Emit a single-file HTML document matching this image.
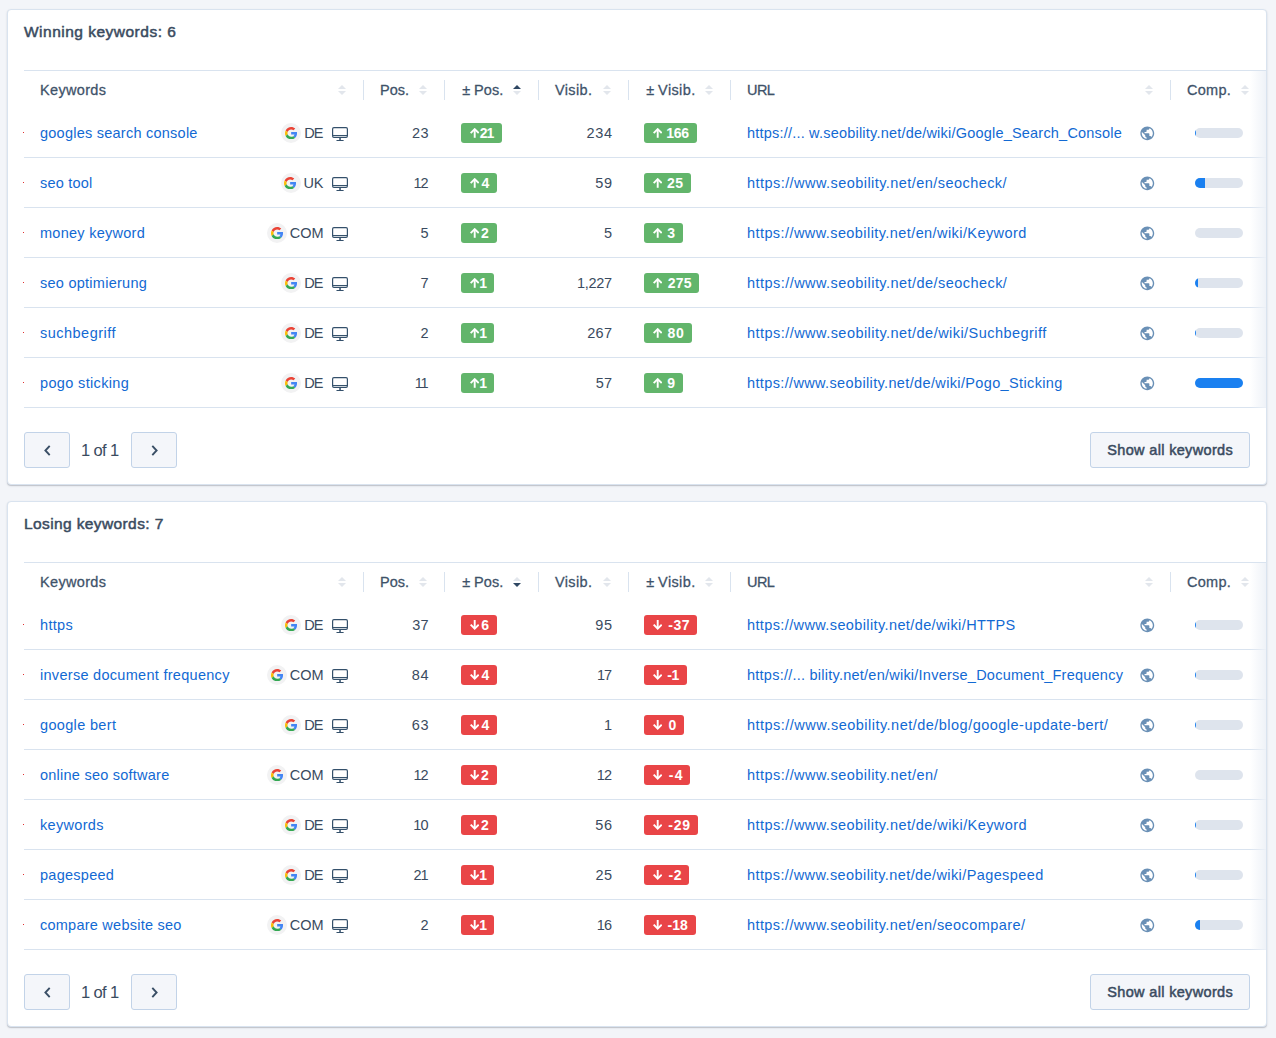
<!DOCTYPE html>
<html lang="en"><head><meta charset="utf-8"><title>Keywords</title>
<style>
*{box-sizing:border-box;margin:0;padding:0}
html,body{width:1276px;height:1038px;overflow:hidden}
body{background:#f3f5f9;font-family:"Liberation Sans",sans-serif;font-size:14.5px;color:#3a4b60;position:relative}
.card{position:absolute;left:7px;width:1260px;background:#fff;border:1px solid #d9e3ef;border-radius:4px;box-shadow:0 1px 1px rgba(30,40,60,.2),0 1px 3px rgba(30,40,60,.07)}
.card:nth-of-type(1){top:9px;height:476px}
.card:nth-of-type(2){top:501px;height:526px}
.title{position:absolute;left:16px;top:13px;-webkit-text-stroke:.5px #3a4b60;font-size:15.500px;line-height:18px;color:#3a4b60;white-space:nowrap}
.tw{position:absolute;left:16px;right:0;top:60px;border-top:1px solid #d9e3ef}
.thead{height:37px;display:flex;align-items:center}
.th{position:relative;height:37px;display:flex;align-items:center;padding-left:16px;color:#3a4b60;white-space:nowrap}
.thl{white-space:pre;color:#3e5269;-webkit-text-stroke:.27px #3e5269}
.th:after{content:"";position:absolute;right:0;top:9px;height:20px;width:1px;background:#d9e3ef}
.th.c7:after{display:none}
.sort{position:absolute;right:18px;top:14px;width:8px;height:10px}
.tr{height:50px;display:flex;align-items:center;box-shadow:inset 0 -1px 0 #d9e3ef;position:relative}
.dot{position:absolute;left:-1px;top:24px;width:1px;height:1px;background:#e03030}
.td{height:50px;display:flex;align-items:center;padding-left:16px;white-space:nowrap}
.c1{width:340px}.c2{width:81px}.c3{width:94px}.c4{width:90px}.c5{width:102px}.c6{width:440px}.c7{width:95px}
a{color:#1269d3;text-decoration:none}
.td.c1{justify-content:space-between;padding-right:16px}
.se{display:flex;align-items:center}
.gc{width:20px;height:20px;border-radius:50%;background:#f2f2f3;display:flex;align-items:center;justify-content:center}
.g{width:12.300px;height:12.300px;display:block}
.cc{margin-left:3px}
.mon{width:16px;height:14.200px;margin-top:2px}
.td.c2,.td.c4{justify-content:flex-end;padding-right:17px}.td.c2{padding-right:16.400px}
.badge{display:inline-flex;align-items:center;height:20px;border-radius:3px;color:#fff;font-weight:bold;font-size:14px;padding:0 7.800px 0 8.900px}
.ar{width:9.400px;height:9.900px;flex:none}
.bt{margin-left:auto}
.up{background:#62b56b}.down{background:#e94547}
.td.c6{position:relative}
.globe{position:absolute;right:15.300px;top:16.500px;width:16.600px;height:16.600px}
.bar{display:block;margin-left:8px;width:48px;height:10px;border-radius:5px;background:#dee4ed;overflow:hidden}
.bar i{display:block;height:100%;background:#1a80f0}
.fade{position:absolute;right:0;top:0;bottom:0;width:16px;background:linear-gradient(90deg,rgba(243,245,249,0),rgba(237,241,247,.92))}
.foot{position:absolute;left:16px;right:16px;bottom:16px;height:36px;display:flex;align-items:center}
.pb{width:46px;height:36px;border:1px solid #c2d3e8;border-radius:3px;background:#f4f6fa;display:flex;align-items:center;justify-content:center}
.chev{width:7px;height:11px}
.pg{font-size:16.500px;margin-left:11px;white-space:nowrap}
.sa{margin-left:auto;width:160px;height:36px;border:1px solid #c2d3e8;border-radius:3px;background:#f4f6fa;display:flex;align-items:center;justify-content:center;-webkit-text-stroke:.5px #3a4b60;font-size:14.500px;color:#3a4b60;white-space:nowrap}
.td.c5{padding-left:15px}
.c7 .sort{right:17px}

</style></head><body>
<div class="card"><div class="title" style="letter-spacing:0.491px;margin-right:-0.491px">Winning keywords: 6</div><div class="tw"><div class="thead"><div class="th c1"><span class="thl" style="letter-spacing:0.324px;margin-right:-0.324px">Keywords</span><svg class="sort" viewBox="0 0 8 10"><path d="M4 0L8 4H0z" fill="#e2e6ec"/><path d="M4 10L0 6h8z" fill="#e2e6ec"/></svg></div><div class="th c2"><span class="thl" style="letter-spacing:0.031px;margin-right:-0.031px">Pos.</span><svg class="sort" viewBox="0 0 8 10"><path d="M4 0L8 4H0z" fill="#e2e6ec"/><path d="M4 10L0 6h8z" fill="#e2e6ec"/></svg></div><div class="th c3"><span class="thl" style="letter-spacing:-0.061px;margin-right:0.061px;margin-left:1.2px">± </span><span class="thl" style="letter-spacing:0.031px;margin-right:-0.031px">Pos.</span><svg class="sort" viewBox="0 0 8 10"><path d="M4 0L8 4H0z" fill="#2f4763"/><path d="M4 10L0 6h8z" fill="#e2e6ec"/></svg></div><div class="th c4"><span class="thl" style="letter-spacing:0.370px;margin-right:-0.370px">Visib.</span><svg class="sort" viewBox="0 0 8 10"><path d="M4 0L8 4H0z" fill="#e2e6ec"/><path d="M4 10L0 6h8z" fill="#e2e6ec"/></svg></div><div class="th c5"><span class="thl" style="letter-spacing:-0.061px;margin-right:0.061px;margin-left:1.2px">± </span><span class="thl" style="letter-spacing:0.370px;margin-right:-0.370px">Visib.</span><svg class="sort" viewBox="0 0 8 10"><path d="M4 0L8 4H0z" fill="#e2e6ec"/><path d="M4 10L0 6h8z" fill="#e2e6ec"/></svg></div><div class="th c6"><span class="thl" style="letter-spacing:-0.552px;margin-right:0.552px">URL</span><svg class="sort" viewBox="0 0 8 10"><path d="M4 0L8 4H0z" fill="#e2e6ec"/><path d="M4 10L0 6h8z" fill="#e2e6ec"/></svg></div><div class="th c7"><span class="thl" style="letter-spacing:0.269px;margin-right:-0.269px">Comp.</span><svg class="sort" viewBox="0 0 8 10"><path d="M4 0L8 4H0z" fill="#e2e6ec"/><path d="M4 10L0 6h8z" fill="#e2e6ec"/></svg></div></div><div class="tr"><i class="dot"></i><div class="td c1"><a style="letter-spacing:0.241px;margin-right:-0.241px">googles search console</a><span class="se"><span class="gc"><svg class="g" viewBox="0 0 48 48"><path fill="#EA4335" d="M24 9.5c3.540 0 6.710 1.220 9.210 3.600l6.850-6.850C35.900 2.380 30.470 0 24 0 14.620 0 6.510 5.380 2.560 13.220l7.980 6.190C12.430 13.720 17.740 9.500 24 9.500z"/><path fill="#4285F4" d="M46.980 24.550c0-1.570-.15-3.090-.38-4.550H24v9.020h12.940c-.58 2.960-2.260 5.480-4.780 7.180l7.730 6c4.510-4.180 7.090-10.360 7.090-17.650z"/><path fill="#FBBC05" d="M10.530 28.590c-.48-1.450-.76-2.990-.76-4.590s.27-3.140.76-4.590l-7.980-6.190C.92 16.460 0 20.120 0 24c0 3.880.92 7.540 2.560 10.780l7.970-6.190z"/><path fill="#34A853" d="M24 48c6.480 0 11.930-2.130 15.890-5.810l-7.730-6c-2.150 1.450-4.920 2.300-8.160 2.300-6.260 0-11.570-4.220-13.470-9.910l-7.980 6.190C6.510 42.620 14.620 48 24 48z"/></svg></span><span class="cc" style="letter-spacing:-0.812px;margin-right:9.312px">DE</span><svg class="mon" viewBox="0 0 16 14.2" fill="none" stroke="#34506b"><rect x="0.600" y="0.600" width="14.800" height="9.800" rx="1.300" stroke-width="1.200"/><path d="M0.600 8.500h14.800" stroke-width="1"/><path d="M8.050 11v2.500" stroke-width="1.900" opacity=".8"/><path d="M4.900 13.550h6.300" stroke-width="1.100" stroke-linecap="round"/></svg></span></div><div class="td c2"><span style="letter-spacing:0.523px;margin-right:-0.523px">23</span></div><div class="td c3"><span class="badge up" style="width:41.16px"><svg class="ar" viewBox="13 49 91 96"><path d="M49.300 62h18.500v82h-18.500z" fill="#fff"/><path d="M19.500 99L58.500 60l39 39" fill="none" stroke="#fff" stroke-width="18.5"/></svg><span class="bt" style="letter-spacing:-0.891px;margin-right:0.891px">21</span></span></div><div class="td c4"><span style="letter-spacing:0.677px;margin-right:-0.677px">234</span></div><div class="td c5"><span class="badge up" style="width:52.94px"><svg class="ar" viewBox="13 49 91 96"><path d="M49.300 62h18.500v82h-18.500z" fill="#fff"/><path d="M19.500 99L58.500 60l39 39" fill="none" stroke="#fff" stroke-width="18.5"/></svg><span class="bt" style="letter-spacing:-0.286px;margin-right:0.286px">166</span></span></div><div class="td c6"><a style="letter-spacing:0.207px;margin-right:-0.207px">https://... w.seobility.net/de/wiki/Google_Search_Console</a><svg class="globe" viewBox="0 0 24 24"><path fill="#6a90b6" d="M12 2C6.480 2 2 6.480 2 12s4.480 10 10 10 10-4.480 10-10S17.520 2 12 2zm-1 17.930c-3.950-.49-7-3.850-7-7.930 0-.62.080-1.210.210-1.790L9 15v1c0 1.100.9 2 2 2v1.930zm6.900-2.540c-.26-.81-1-1.390-1.900-1.390h-1v-3c0-.55-.45-1-1-1H8v-2h2c.55 0 1-.45 1-1V7h2c1.100 0 2-.9 2-2v-.41c2.930 1.190 5 4.060 5 7.410 0 2.080-.8 3.970-2.100 5.390z"/></svg></div><div class="td c7"><span class="bar"><i style="width:1.2px"></i></span></div></div><div class="tr"><i class="dot"></i><div class="td c1"><a style="letter-spacing:0.215px;margin-right:-0.215px">seo tool</a><span class="se"><span class="gc"><svg class="g" viewBox="0 0 48 48"><path fill="#EA4335" d="M24 9.5c3.540 0 6.710 1.220 9.210 3.600l6.850-6.850C35.900 2.380 30.470 0 24 0 14.620 0 6.510 5.380 2.560 13.220l7.980 6.190C12.430 13.720 17.740 9.500 24 9.500z"/><path fill="#4285F4" d="M46.980 24.550c0-1.570-.15-3.090-.38-4.550H24v9.020h12.940c-.58 2.960-2.260 5.480-4.780 7.180l7.730 6c4.510-4.180 7.090-10.360 7.090-17.650z"/><path fill="#FBBC05" d="M10.530 28.590c-.48-1.450-.76-2.990-.76-4.590s.27-3.140.76-4.590l-7.980-6.190C.92 16.460 0 20.120 0 24c0 3.880.92 7.540 2.560 10.780l7.970-6.190z"/><path fill="#34A853" d="M24 48c6.480 0 11.930-2.130 15.890-5.810l-7.730-6c-2.150 1.450-4.920 2.300-8.160 2.300-6.260 0-11.570-4.220-13.470-9.910l-7.980 6.190C6.510 42.620 14.620 48 24 48z"/></svg></span><span class="cc" style="letter-spacing:-0.164px;margin-right:8.664px">UK</span><svg class="mon" viewBox="0 0 16 14.2" fill="none" stroke="#34506b"><rect x="0.600" y="0.600" width="14.800" height="9.800" rx="1.300" stroke-width="1.200"/><path d="M0.600 8.500h14.800" stroke-width="1"/><path d="M8.050 11v2.500" stroke-width="1.900" opacity=".8"/><path d="M4.900 13.550h6.300" stroke-width="1.100" stroke-linecap="round"/></svg></span></div><div class="td c2"><span style="letter-spacing:-0.953px;margin-right:0.953px">12</span></div><div class="td c3"><span class="badge up" style="width:36.16px"><svg class="ar" viewBox="13 49 91 96"><path d="M49.300 62h18.500v82h-18.500z" fill="#fff"/><path d="M19.500 99L58.500 60l39 39" fill="none" stroke="#fff" stroke-width="18.5"/></svg><span class="bt" style="letter-spacing:1.000px;margin-right:-1.000px">4</span></span></div><div class="td c4"><span style="letter-spacing:0.531px;margin-right:-0.531px">59</span></div><div class="td c5"><span class="badge up" style="width:46.96px"><svg class="ar" viewBox="13 49 91 96"><path d="M49.300 62h18.500v82h-18.500z" fill="#fff"/><path d="M19.500 99L58.500 60l39 39" fill="none" stroke="#fff" stroke-width="18.5"/></svg><span class="bt" style="letter-spacing:0.461px;margin-right:-0.461px">25</span></span></div><div class="td c6"><a style="letter-spacing:0.445px;margin-right:-0.445px">https://www.seobility.net/en/seocheck/</a><svg class="globe" viewBox="0 0 24 24"><path fill="#6a90b6" d="M12 2C6.480 2 2 6.480 2 12s4.480 10 10 10 10-4.480 10-10S17.520 2 12 2zm-1 17.930c-3.950-.49-7-3.850-7-7.930 0-.62.080-1.210.210-1.790L9 15v1c0 1.100.9 2 2 2v1.930zm6.900-2.540c-.26-.81-1-1.390-1.900-1.390h-1v-3c0-.55-.45-1-1-1H8v-2h2c.55 0 1-.45 1-1V7h2c1.100 0 2-.9 2-2v-.41c2.930 1.190 5 4.060 5 7.410 0 2.080-.8 3.970-2.100 5.390z"/></svg></div><div class="td c7"><span class="bar"><i style="width:10px"></i></span></div></div><div class="tr"><i class="dot"></i><div class="td c1"><a style="letter-spacing:0.263px;margin-right:-0.263px">money keyword</a><span class="se"><span class="gc"><svg class="g" viewBox="0 0 48 48"><path fill="#EA4335" d="M24 9.5c3.540 0 6.710 1.220 9.210 3.600l6.850-6.850C35.900 2.380 30.470 0 24 0 14.620 0 6.510 5.380 2.560 13.220l7.980 6.190C12.430 13.720 17.740 9.500 24 9.500z"/><path fill="#4285F4" d="M46.980 24.550c0-1.570-.15-3.090-.38-4.550H24v9.020h12.940c-.58 2.960-2.260 5.480-4.780 7.180l7.730 6c4.510-4.180 7.090-10.360 7.090-17.650z"/><path fill="#FBBC05" d="M10.530 28.590c-.48-1.450-.76-2.990-.76-4.590s.27-3.140.76-4.590l-7.980-6.190C.92 16.460 0 20.120 0 24c0 3.880.92 7.540 2.560 10.780l7.970-6.190z"/><path fill="#34A853" d="M24 48c6.480 0 11.930-2.130 15.890-5.810l-7.730-6c-2.150 1.450-4.920 2.300-8.160 2.300-6.260 0-11.570-4.220-13.470-9.910l-7.980 6.190C6.510 42.620 14.620 48 24 48z"/></svg></span><span class="cc" style="letter-spacing:-0.089px;margin-right:8.589px">COM</span><svg class="mon" viewBox="0 0 16 14.2" fill="none" stroke="#34506b"><rect x="0.600" y="0.600" width="14.800" height="9.800" rx="1.300" stroke-width="1.200"/><path d="M0.600 8.500h14.800" stroke-width="1"/><path d="M8.050 11v2.500" stroke-width="1.900" opacity=".8"/><path d="M4.900 13.550h6.300" stroke-width="1.100" stroke-linecap="round"/></svg></span></div><div class="td c2"><span style="letter-spacing:0.438px;margin-right:-0.438px">5</span></div><div class="td c3"><span class="badge up" style="width:35.57px"><svg class="ar" viewBox="13 49 91 96"><path d="M49.300 62h18.500v82h-18.500z" fill="#fff"/><path d="M19.500 99L58.500 60l39 39" fill="none" stroke="#fff" stroke-width="18.5"/></svg><span class="bt" style="letter-spacing:0.406px;margin-right:-0.406px">2</span></span></div><div class="td c4"><span style="letter-spacing:0.438px;margin-right:-0.438px">5</span></div><div class="td c5"><span class="badge up" style="width:38.85px"><svg class="ar" viewBox="13 49 91 96"><path d="M49.300 62h18.500v82h-18.500z" fill="#fff"/><path d="M19.500 99L58.500 60l39 39" fill="none" stroke="#fff" stroke-width="18.5"/></svg><span class="bt" style="letter-spacing:0.609px;margin-right:-0.609px">3</span></span></div><div class="td c6"><a style="letter-spacing:0.421px;margin-right:-0.421px">https://www.seobility.net/en/wiki/Keyword</a><svg class="globe" viewBox="0 0 24 24"><path fill="#6a90b6" d="M12 2C6.480 2 2 6.480 2 12s4.480 10 10 10 10-4.480 10-10S17.520 2 12 2zm-1 17.930c-3.950-.49-7-3.850-7-7.930 0-.62.080-1.210.210-1.790L9 15v1c0 1.100.9 2 2 2v1.930zm6.900-2.540c-.26-.81-1-1.390-1.900-1.390h-1v-3c0-.55-.45-1-1-1H8v-2h2c.55 0 1-.45 1-1V7h2c1.100 0 2-.9 2-2v-.41c2.930 1.190 5 4.060 5 7.410 0 2.080-.8 3.970-2.100 5.390z"/></svg></div><div class="td c7"><span class="bar"><i style="width:0px"></i></span></div></div><div class="tr"><i class="dot"></i><div class="td c1"><a style="letter-spacing:0.258px;margin-right:-0.258px">seo optimierung</a><span class="se"><span class="gc"><svg class="g" viewBox="0 0 48 48"><path fill="#EA4335" d="M24 9.5c3.540 0 6.710 1.220 9.210 3.600l6.850-6.850C35.900 2.380 30.470 0 24 0 14.620 0 6.510 5.380 2.560 13.220l7.980 6.190C12.430 13.720 17.740 9.500 24 9.500z"/><path fill="#4285F4" d="M46.980 24.550c0-1.570-.15-3.090-.38-4.550H24v9.020h12.940c-.58 2.960-2.260 5.480-4.780 7.180l7.730 6c4.510-4.180 7.090-10.360 7.090-17.650z"/><path fill="#FBBC05" d="M10.530 28.590c-.48-1.450-.76-2.990-.76-4.590s.27-3.140.76-4.590l-7.980-6.190C.92 16.460 0 20.120 0 24c0 3.880.92 7.540 2.560 10.780l7.970-6.190z"/><path fill="#34A853" d="M24 48c6.480 0 11.930-2.130 15.890-5.810l-7.730-6c-2.150 1.450-4.920 2.300-8.160 2.300-6.260 0-11.570-4.220-13.470-9.910l-7.980 6.190C6.510 42.620 14.620 48 24 48z"/></svg></span><span class="cc" style="letter-spacing:-0.812px;margin-right:9.312px">DE</span><svg class="mon" viewBox="0 0 16 14.2" fill="none" stroke="#34506b"><rect x="0.600" y="0.600" width="14.800" height="9.800" rx="1.300" stroke-width="1.200"/><path d="M0.600 8.500h14.800" stroke-width="1"/><path d="M8.050 11v2.500" stroke-width="1.900" opacity=".8"/><path d="M4.900 13.550h6.300" stroke-width="1.100" stroke-linecap="round"/></svg></span></div><div class="td c2"><span style="letter-spacing:-0.141px;margin-right:0.141px">7</span></div><div class="td c3"><span class="badge up" style="width:32.98px"><svg class="ar" viewBox="13 49 91 96"><path d="M49.300 62h18.500v82h-18.500z" fill="#fff"/><path d="M19.500 99L58.500 60l39 39" fill="none" stroke="#fff" stroke-width="18.5"/></svg><span class="bt" style="letter-spacing:-2.188px;margin-right:2.188px">1</span></span></div><div class="td c4"><span style="letter-spacing:-0.312px;margin-right:0.312px">1,227</span></div><div class="td c5"><span class="badge up" style="width:55.38px"><svg class="ar" viewBox="13 49 91 96"><path d="M49.300 62h18.500v82h-18.500z" fill="#fff"/><path d="M19.500 99L58.500 60l39 39" fill="none" stroke="#fff" stroke-width="18.5"/></svg><span class="bt" style="letter-spacing:0.193px;margin-right:-0.193px">275</span></span></div><div class="td c6"><a style="letter-spacing:0.453px;margin-right:-0.453px">https://www.seobility.net/de/seocheck/</a><svg class="globe" viewBox="0 0 24 24"><path fill="#6a90b6" d="M12 2C6.480 2 2 6.480 2 12s4.480 10 10 10 10-4.480 10-10S17.520 2 12 2zm-1 17.930c-3.950-.49-7-3.850-7-7.930 0-.62.080-1.210.210-1.790L9 15v1c0 1.100.9 2 2 2v1.930zm6.900-2.540c-.26-.81-1-1.390-1.900-1.390h-1v-3c0-.55-.45-1-1-1H8v-2h2c.55 0 1-.45 1-1V7h2c1.100 0 2-.9 2-2v-.41c2.930 1.190 5 4.060 5 7.410 0 2.080-.8 3.970-2.100 5.390z"/></svg></div><div class="td c7"><span class="bar"><i style="width:3px"></i></span></div></div><div class="tr"><i class="dot"></i><div class="td c1"><a style="letter-spacing:0.482px;margin-right:-0.482px">suchbegriff</a><span class="se"><span class="gc"><svg class="g" viewBox="0 0 48 48"><path fill="#EA4335" d="M24 9.5c3.540 0 6.710 1.220 9.210 3.600l6.850-6.850C35.900 2.380 30.470 0 24 0 14.620 0 6.510 5.380 2.560 13.220l7.980 6.190C12.430 13.720 17.740 9.500 24 9.500z"/><path fill="#4285F4" d="M46.980 24.550c0-1.570-.15-3.090-.38-4.550H24v9.020h12.940c-.58 2.960-2.260 5.480-4.780 7.180l7.730 6c4.510-4.180 7.090-10.360 7.090-17.650z"/><path fill="#FBBC05" d="M10.530 28.590c-.48-1.450-.76-2.990-.76-4.590s.27-3.140.76-4.590l-7.980-6.190C.92 16.460 0 20.120 0 24c0 3.880.92 7.540 2.560 10.780l7.970-6.190z"/><path fill="#34A853" d="M24 48c6.480 0 11.930-2.130 15.890-5.810l-7.730-6c-2.150 1.450-4.920 2.300-8.160 2.300-6.260 0-11.570-4.220-13.470-9.910l-7.980 6.190C6.510 42.620 14.620 48 24 48z"/></svg></span><span class="cc" style="letter-spacing:-0.812px;margin-right:9.312px">DE</span><svg class="mon" viewBox="0 0 16 14.2" fill="none" stroke="#34506b"><rect x="0.600" y="0.600" width="14.800" height="9.800" rx="1.300" stroke-width="1.200"/><path d="M0.600 8.500h14.800" stroke-width="1"/><path d="M8.050 11v2.500" stroke-width="1.900" opacity=".8"/><path d="M4.900 13.550h6.300" stroke-width="1.100" stroke-linecap="round"/></svg></span></div><div class="td c2"><span style="letter-spacing:0.469px;margin-right:-0.469px">2</span></div><div class="td c3"><span class="badge up" style="width:32.98px"><svg class="ar" viewBox="13 49 91 96"><path d="M49.300 62h18.500v82h-18.500z" fill="#fff"/><path d="M19.500 99L58.500 60l39 39" fill="none" stroke="#fff" stroke-width="18.5"/></svg><span class="bt" style="letter-spacing:-2.188px;margin-right:2.188px">1</span></span></div><div class="td c4"><span style="letter-spacing:0.318px;margin-right:-0.318px">267</span></div><div class="td c5"><span class="badge up" style="width:47.68px"><svg class="ar" viewBox="13 49 91 96"><path d="M49.300 62h18.500v82h-18.500z" fill="#fff"/><path d="M19.500 99L58.500 60l39 39" fill="none" stroke="#fff" stroke-width="18.5"/></svg><span class="bt" style="letter-spacing:0.828px;margin-right:-0.828px">80</span></span></div><div class="td c6"><a style="letter-spacing:0.458px;margin-right:-0.458px">https://www.seobility.net/de/wiki/Suchbegriff</a><svg class="globe" viewBox="0 0 24 24"><path fill="#6a90b6" d="M12 2C6.480 2 2 6.480 2 12s4.480 10 10 10 10-4.480 10-10S17.520 2 12 2zm-1 17.930c-3.950-.49-7-3.850-7-7.930 0-.62.080-1.210.210-1.790L9 15v1c0 1.100.9 2 2 2v1.930zm6.900-2.540c-.26-.81-1-1.390-1.900-1.390h-1v-3c0-.55-.45-1-1-1H8v-2h2c.55 0 1-.45 1-1V7h2c1.100 0 2-.9 2-2v-.41c2.930 1.190 5 4.060 5 7.410 0 2.080-.8 3.970-2.100 5.390z"/></svg></div><div class="td c7"><span class="bar"><i style="width:0.7px"></i></span></div></div><div class="tr"><i class="dot"></i><div class="td c1"><a style="letter-spacing:0.350px;margin-right:-0.350px">pogo sticking</a><span class="se"><span class="gc"><svg class="g" viewBox="0 0 48 48"><path fill="#EA4335" d="M24 9.5c3.540 0 6.710 1.220 9.210 3.600l6.850-6.850C35.900 2.380 30.470 0 24 0 14.620 0 6.510 5.380 2.560 13.220l7.980 6.190C12.430 13.720 17.740 9.500 24 9.500z"/><path fill="#4285F4" d="M46.980 24.550c0-1.570-.15-3.090-.38-4.550H24v9.020h12.940c-.58 2.960-2.260 5.480-4.780 7.180l7.730 6c4.510-4.180 7.090-10.360 7.090-17.650z"/><path fill="#FBBC05" d="M10.530 28.590c-.48-1.450-.76-2.990-.76-4.590s.27-3.140.76-4.590l-7.980-6.190C.92 16.460 0 20.120 0 24c0 3.880.92 7.540 2.560 10.780l7.970-6.190z"/><path fill="#34A853" d="M24 48c6.480 0 11.930-2.130 15.890-5.810l-7.730-6c-2.150 1.450-4.920 2.300-8.160 2.300-6.260 0-11.570-4.220-13.470-9.910l-7.980 6.190C6.510 42.620 14.620 48 24 48z"/></svg></span><span class="cc" style="letter-spacing:-0.812px;margin-right:9.312px">DE</span><svg class="mon" viewBox="0 0 16 14.2" fill="none" stroke="#34506b"><rect x="0.600" y="0.600" width="14.800" height="9.800" rx="1.300" stroke-width="1.200"/><path d="M0.600 8.500h14.800" stroke-width="1"/><path d="M8.050 11v2.500" stroke-width="1.900" opacity=".8"/><path d="M4.900 13.550h6.300" stroke-width="1.100" stroke-linecap="round"/></svg></span></div><div class="td c2"><span style="letter-spacing:-1.250px;margin-right:1.250px">11</span></div><div class="td c3"><span class="badge up" style="width:32.98px"><svg class="ar" viewBox="13 49 91 96"><path d="M49.300 62h18.500v82h-18.500z" fill="#fff"/><path d="M19.500 99L58.500 60l39 39" fill="none" stroke="#fff" stroke-width="18.5"/></svg><span class="bt" style="letter-spacing:-2.188px;margin-right:2.188px">1</span></span></div><div class="td c4"><span style="letter-spacing:0.148px;margin-right:-0.148px">57</span></div><div class="td c5"><span class="badge up" style="width:38.90px"><svg class="ar" viewBox="13 49 91 96"><path d="M49.300 62h18.500v82h-18.500z" fill="#fff"/><path d="M19.500 99L58.500 60l39 39" fill="none" stroke="#fff" stroke-width="18.5"/></svg><span class="bt" style="letter-spacing:0.656px;margin-right:-0.656px">9</span></span></div><div class="td c6"><a style="letter-spacing:0.361px;margin-right:-0.361px">https://www.seobility.net/de/wiki/Pogo_Sticking</a><svg class="globe" viewBox="0 0 24 24"><path fill="#6a90b6" d="M12 2C6.480 2 2 6.480 2 12s4.480 10 10 10 10-4.480 10-10S17.520 2 12 2zm-1 17.930c-3.950-.49-7-3.850-7-7.930 0-.62.080-1.210.210-1.790L9 15v1c0 1.100.9 2 2 2v1.930zm6.900-2.540c-.26-.81-1-1.390-1.900-1.390h-1v-3c0-.55-.45-1-1-1H8v-2h2c.55 0 1-.45 1-1V7h2c1.100 0 2-.9 2-2v-.41c2.930 1.190 5 4.060 5 7.410 0 2.080-.8 3.970-2.100 5.390z"/></svg></div><div class="td c7"><span class="bar"><i style="width:48px"></i></span></div></div><div class="fade"></div></div><div class="foot"><span class="pb"><svg class="chev" viewBox="0 0 7 11" fill="none" stroke="#3a4f66" stroke-width="1.900"><path d="M5.700 0.900L1.400 5.500l4.300 4.600"/></svg></span><span class="pg" style="letter-spacing:-0.628px;margin-right:12.628px">1 of 1</span><span class="pb"><svg class="chev" viewBox="0 0 7 11" fill="none" stroke="#3a4f66" stroke-width="1.900"><path d="M1.300 0.900L5.600 5.500l-4.300 4.600"/></svg></span><span class="sa"><span style="letter-spacing:0.338px;margin-right:-0.338px">Show all keywords</span></span></div></div>
<div class="card"><div class="title" style="letter-spacing:0.388px;margin-right:-0.388px">Losing keywords: 7</div><div class="tw"><div class="thead"><div class="th c1"><span class="thl" style="letter-spacing:0.324px;margin-right:-0.324px">Keywords</span><svg class="sort" viewBox="0 0 8 10"><path d="M4 0L8 4H0z" fill="#e2e6ec"/><path d="M4 10L0 6h8z" fill="#e2e6ec"/></svg></div><div class="th c2"><span class="thl" style="letter-spacing:0.031px;margin-right:-0.031px">Pos.</span><svg class="sort" viewBox="0 0 8 10"><path d="M4 0L8 4H0z" fill="#e2e6ec"/><path d="M4 10L0 6h8z" fill="#e2e6ec"/></svg></div><div class="th c3"><span class="thl" style="letter-spacing:-0.061px;margin-right:0.061px;margin-left:1.2px">± </span><span class="thl" style="letter-spacing:0.031px;margin-right:-0.031px">Pos.</span><svg class="sort" viewBox="0 0 8 10"><path d="M4 0L8 4H0z" fill="#e2e6ec"/><path d="M4 10L0 6h8z" fill="#2f4763"/></svg></div><div class="th c4"><span class="thl" style="letter-spacing:0.370px;margin-right:-0.370px">Visib.</span><svg class="sort" viewBox="0 0 8 10"><path d="M4 0L8 4H0z" fill="#e2e6ec"/><path d="M4 10L0 6h8z" fill="#e2e6ec"/></svg></div><div class="th c5"><span class="thl" style="letter-spacing:-0.061px;margin-right:0.061px;margin-left:1.2px">± </span><span class="thl" style="letter-spacing:0.370px;margin-right:-0.370px">Visib.</span><svg class="sort" viewBox="0 0 8 10"><path d="M4 0L8 4H0z" fill="#e2e6ec"/><path d="M4 10L0 6h8z" fill="#e2e6ec"/></svg></div><div class="th c6"><span class="thl" style="letter-spacing:-0.552px;margin-right:0.552px">URL</span><svg class="sort" viewBox="0 0 8 10"><path d="M4 0L8 4H0z" fill="#e2e6ec"/><path d="M4 10L0 6h8z" fill="#e2e6ec"/></svg></div><div class="th c7"><span class="thl" style="letter-spacing:0.269px;margin-right:-0.269px">Comp.</span><svg class="sort" viewBox="0 0 8 10"><path d="M4 0L8 4H0z" fill="#e2e6ec"/><path d="M4 10L0 6h8z" fill="#e2e6ec"/></svg></div></div><div class="tr"><i class="dot"></i><div class="td c1"><a style="letter-spacing:0.325px;margin-right:-0.325px">https</a><span class="se"><span class="gc"><svg class="g" viewBox="0 0 48 48"><path fill="#EA4335" d="M24 9.5c3.540 0 6.710 1.220 9.210 3.600l6.850-6.850C35.900 2.380 30.470 0 24 0 14.620 0 6.510 5.380 2.560 13.220l7.980 6.190C12.430 13.720 17.740 9.500 24 9.500z"/><path fill="#4285F4" d="M46.980 24.550c0-1.570-.15-3.090-.38-4.550H24v9.020h12.940c-.58 2.960-2.260 5.480-4.780 7.180l7.730 6c4.510-4.180 7.090-10.360 7.090-17.650z"/><path fill="#FBBC05" d="M10.530 28.590c-.48-1.450-.76-2.990-.76-4.590s.27-3.140.76-4.590l-7.980-6.190C.92 16.460 0 20.120 0 24c0 3.880.92 7.540 2.560 10.780l7.970-6.190z"/><path fill="#34A853" d="M24 48c6.480 0 11.930-2.130 15.890-5.810l-7.730-6c-2.150 1.450-4.920 2.300-8.160 2.300-6.260 0-11.570-4.220-13.470-9.910l-7.980 6.190C6.510 42.620 14.620 48 24 48z"/></svg></span><span class="cc" style="letter-spacing:-0.812px;margin-right:9.312px">DE</span><svg class="mon" viewBox="0 0 16 14.2" fill="none" stroke="#34506b"><rect x="0.600" y="0.600" width="14.800" height="9.800" rx="1.300" stroke-width="1.200"/><path d="M0.600 8.500h14.800" stroke-width="1"/><path d="M8.050 11v2.500" stroke-width="1.900" opacity=".8"/><path d="M4.900 13.550h6.300" stroke-width="1.100" stroke-linecap="round"/></svg></span></div><div class="td c2"><span style="letter-spacing:0.219px;margin-right:-0.219px">37</span></div><div class="td c3"><span class="badge down" style="width:35.82px"><svg class="ar" viewBox="13 49 91 96"><path d="M49.300 49h18.500v82h-18.500z" fill="#fff"/><path d="M19.500 94L58.500 133l39-39" fill="none" stroke="#fff" stroke-width="18.5"/></svg><span class="bt" style="letter-spacing:0.656px;margin-right:-0.656px">6</span></span></div><div class="td c4"><span style="letter-spacing:0.531px;margin-right:-0.531px">95</span></div><div class="td c5"><span class="badge down" style="width:53.41px"><svg class="ar" viewBox="13 49 91 96"><path d="M49.300 49h18.500v82h-18.500z" fill="#fff"/><path d="M19.500 94L58.500 133l39-39" fill="none" stroke="#fff" stroke-width="18.5"/></svg><span class="bt" style="letter-spacing:0.578px;margin-right:-0.578px">-37</span></span></div><div class="td c6"><a style="letter-spacing:0.385px;margin-right:-0.385px">https://www.seobility.net/de/wiki/HTTPS</a><svg class="globe" viewBox="0 0 24 24"><path fill="#6a90b6" d="M12 2C6.480 2 2 6.480 2 12s4.480 10 10 10 10-4.480 10-10S17.520 2 12 2zm-1 17.930c-3.950-.49-7-3.850-7-7.930 0-.62.080-1.210.210-1.790L9 15v1c0 1.100.9 2 2 2v1.930zm6.900-2.540c-.26-.81-1-1.390-1.900-1.390h-1v-3c0-.55-.45-1-1-1H8v-2h2c.55 0 1-.45 1-1V7h2c1.100 0 2-.9 2-2v-.41c2.930 1.190 5 4.060 5 7.410 0 2.080-.8 3.970-2.100 5.390z"/></svg></div><div class="td c7"><span class="bar"><i style="width:1.2px"></i></span></div></div><div class="tr"><i class="dot"></i><div class="td c1"><a style="letter-spacing:0.290px;margin-right:-0.290px">inverse document frequency</a><span class="se"><span class="gc"><svg class="g" viewBox="0 0 48 48"><path fill="#EA4335" d="M24 9.5c3.540 0 6.710 1.220 9.210 3.600l6.850-6.850C35.900 2.380 30.470 0 24 0 14.620 0 6.510 5.380 2.560 13.220l7.980 6.190C12.430 13.720 17.740 9.500 24 9.500z"/><path fill="#4285F4" d="M46.980 24.550c0-1.570-.15-3.090-.38-4.550H24v9.020h12.940c-.58 2.960-2.260 5.480-4.780 7.180l7.730 6c4.510-4.180 7.090-10.360 7.090-17.650z"/><path fill="#FBBC05" d="M10.530 28.590c-.48-1.450-.76-2.990-.76-4.590s.27-3.140.76-4.590l-7.980-6.190C.92 16.460 0 20.120 0 24c0 3.880.92 7.540 2.560 10.780l7.970-6.190z"/><path fill="#34A853" d="M24 48c6.480 0 11.930-2.130 15.890-5.810l-7.730-6c-2.150 1.450-4.920 2.300-8.160 2.300-6.260 0-11.570-4.220-13.470-9.910l-7.980 6.190C6.510 42.620 14.620 48 24 48z"/></svg></span><span class="cc" style="letter-spacing:-0.089px;margin-right:8.589px">COM</span><svg class="mon" viewBox="0 0 16 14.2" fill="none" stroke="#34506b"><rect x="0.600" y="0.600" width="14.800" height="9.800" rx="1.300" stroke-width="1.200"/><path d="M0.600 8.500h14.800" stroke-width="1"/><path d="M8.050 11v2.500" stroke-width="1.900" opacity=".8"/><path d="M4.900 13.550h6.300" stroke-width="1.100" stroke-linecap="round"/></svg></span></div><div class="td c2"><span style="letter-spacing:0.789px;margin-right:-0.789px">84</span></div><div class="td c3"><span class="badge down" style="width:36.16px"><svg class="ar" viewBox="13 49 91 96"><path d="M49.300 49h18.500v82h-18.500z" fill="#fff"/><path d="M19.500 94L58.500 133l39-39" fill="none" stroke="#fff" stroke-width="18.5"/></svg><span class="bt" style="letter-spacing:1.000px;margin-right:-1.000px">4</span></span></div><div class="td c4"><span style="letter-spacing:-1.250px;margin-right:1.250px">17</span></div><div class="td c5"><span class="badge down" style="width:43.15px"><svg class="ar" viewBox="13 49 91 96"><path d="M49.300 49h18.500v82h-18.500z" fill="#fff"/><path d="M19.500 94L58.500 133l39-39" fill="none" stroke="#fff" stroke-width="18.5"/></svg><span class="bt" style="letter-spacing:-0.383px;margin-right:0.383px">-1</span></span></div><div class="td c6"><a style="letter-spacing:0.241px;margin-right:-0.241px">https://... bility.net/en/wiki/Inverse_Document_Frequency</a><svg class="globe" viewBox="0 0 24 24"><path fill="#6a90b6" d="M12 2C6.480 2 2 6.480 2 12s4.480 10 10 10 10-4.480 10-10S17.520 2 12 2zm-1 17.930c-3.950-.49-7-3.850-7-7.930 0-.62.080-1.210.210-1.790L9 15v1c0 1.100.9 2 2 2v1.930zm6.900-2.540c-.26-.81-1-1.390-1.900-1.390h-1v-3c0-.55-.45-1-1-1H8v-2h2c.55 0 1-.45 1-1V7h2c1.100 0 2-.9 2-2v-.41c2.930 1.190 5 4.060 5 7.410 0 2.080-.8 3.970-2.100 5.390z"/></svg></div><div class="td c7"><span class="bar"><i style="width:1.2px"></i></span></div></div><div class="tr"><i class="dot"></i><div class="td c1"><a style="letter-spacing:0.337px;margin-right:-0.337px">google bert</a><span class="se"><span class="gc"><svg class="g" viewBox="0 0 48 48"><path fill="#EA4335" d="M24 9.5c3.540 0 6.710 1.220 9.210 3.600l6.850-6.850C35.900 2.380 30.470 0 24 0 14.620 0 6.510 5.380 2.560 13.220l7.980 6.190C12.430 13.720 17.740 9.500 24 9.500z"/><path fill="#4285F4" d="M46.980 24.550c0-1.570-.15-3.090-.38-4.550H24v9.020h12.940c-.58 2.960-2.260 5.480-4.780 7.180l7.730 6c4.510-4.180 7.090-10.360 7.090-17.650z"/><path fill="#FBBC05" d="M10.530 28.590c-.48-1.450-.76-2.990-.76-4.590s.27-3.140.76-4.590l-7.980-6.190C.92 16.460 0 20.120 0 24c0 3.880.92 7.540 2.560 10.780l7.970-6.190z"/><path fill="#34A853" d="M24 48c6.480 0 11.930-2.130 15.890-5.810l-7.730-6c-2.150 1.450-4.920 2.300-8.160 2.300-6.260 0-11.570-4.220-13.470-9.910l-7.980 6.190C6.510 42.620 14.620 48 24 48z"/></svg></span><span class="cc" style="letter-spacing:-0.812px;margin-right:9.312px">DE</span><svg class="mon" viewBox="0 0 16 14.2" fill="none" stroke="#34506b"><rect x="0.600" y="0.600" width="14.800" height="9.800" rx="1.300" stroke-width="1.200"/><path d="M0.600 8.500h14.800" stroke-width="1"/><path d="M8.050 11v2.500" stroke-width="1.900" opacity=".8"/><path d="M4.900 13.550h6.300" stroke-width="1.100" stroke-linecap="round"/></svg></span></div><div class="td c2"><span style="letter-spacing:0.602px;margin-right:-0.602px">63</span></div><div class="td c3"><span class="badge down" style="width:36.16px"><svg class="ar" viewBox="13 49 91 96"><path d="M49.300 49h18.500v82h-18.500z" fill="#fff"/><path d="M19.500 94L58.500 133l39-39" fill="none" stroke="#fff" stroke-width="18.5"/></svg><span class="bt" style="letter-spacing:1.000px;margin-right:-1.000px">4</span></span></div><div class="td c4"><span style="letter-spacing:-2.375px;margin-right:2.375px">1</span></div><div class="td c5"><span class="badge down" style="width:40.23px"><svg class="ar" viewBox="13 49 91 96"><path d="M49.300 49h18.500v82h-18.500z" fill="#fff"/><path d="M19.500 94L58.500 133l39-39" fill="none" stroke="#fff" stroke-width="18.5"/></svg><span class="bt" style="letter-spacing:0.984px;margin-right:-0.984px">0</span></span></div><div class="td c6"><a style="letter-spacing:0.481px;margin-right:-0.481px">https://www.seobility.net/de/blog/google-update-bert/</a><svg class="globe" viewBox="0 0 24 24"><path fill="#6a90b6" d="M12 2C6.480 2 2 6.480 2 12s4.480 10 10 10 10-4.480 10-10S17.520 2 12 2zm-1 17.930c-3.950-.49-7-3.850-7-7.930 0-.62.080-1.210.210-1.790L9 15v1c0 1.100.9 2 2 2v1.930zm6.900-2.540c-.26-.81-1-1.390-1.900-1.390h-1v-3c0-.55-.45-1-1-1H8v-2h2c.55 0 1-.45 1-1V7h2c1.100 0 2-.9 2-2v-.41c2.930 1.190 5 4.060 5 7.410 0 2.080-.8 3.970-2.100 5.390z"/></svg></div><div class="td c7"><span class="bar"><i style="width:1.2px"></i></span></div></div><div class="tr"><i class="dot"></i><div class="td c1"><a style="letter-spacing:0.240px;margin-right:-0.240px">online seo software</a><span class="se"><span class="gc"><svg class="g" viewBox="0 0 48 48"><path fill="#EA4335" d="M24 9.5c3.540 0 6.710 1.220 9.210 3.600l6.850-6.850C35.900 2.380 30.470 0 24 0 14.620 0 6.510 5.380 2.560 13.220l7.980 6.190C12.430 13.720 17.740 9.500 24 9.500z"/><path fill="#4285F4" d="M46.980 24.550c0-1.570-.15-3.090-.38-4.550H24v9.020h12.940c-.58 2.960-2.260 5.480-4.780 7.180l7.730 6c4.510-4.180 7.090-10.360 7.090-17.650z"/><path fill="#FBBC05" d="M10.530 28.590c-.48-1.450-.76-2.990-.76-4.590s.27-3.140.76-4.590l-7.980-6.190C.92 16.460 0 20.120 0 24c0 3.880.92 7.540 2.560 10.780l7.970-6.190z"/><path fill="#34A853" d="M24 48c6.480 0 11.930-2.130 15.890-5.810l-7.730-6c-2.150 1.450-4.920 2.300-8.160 2.300-6.260 0-11.570-4.220-13.470-9.910l-7.980 6.190C6.510 42.620 14.620 48 24 48z"/></svg></span><span class="cc" style="letter-spacing:-0.089px;margin-right:8.589px">COM</span><svg class="mon" viewBox="0 0 16 14.2" fill="none" stroke="#34506b"><rect x="0.600" y="0.600" width="14.800" height="9.800" rx="1.300" stroke-width="1.200"/><path d="M0.600 8.500h14.800" stroke-width="1"/><path d="M8.050 11v2.500" stroke-width="1.900" opacity=".8"/><path d="M4.900 13.550h6.300" stroke-width="1.100" stroke-linecap="round"/></svg></span></div><div class="td c2"><span style="letter-spacing:-0.953px;margin-right:0.953px">12</span></div><div class="td c3"><span class="badge down" style="width:35.57px"><svg class="ar" viewBox="13 49 91 96"><path d="M49.300 49h18.500v82h-18.500z" fill="#fff"/><path d="M19.500 94L58.500 133l39-39" fill="none" stroke="#fff" stroke-width="18.5"/></svg><span class="bt" style="letter-spacing:0.406px;margin-right:-0.406px">2</span></span></div><div class="td c4"><span style="letter-spacing:-0.953px;margin-right:0.953px">12</span></div><div class="td c5"><span class="badge down" style="width:46.33px"><svg class="ar" viewBox="13 49 91 96"><path d="M49.300 49h18.500v82h-18.500z" fill="#fff"/><path d="M19.500 94L58.500 133l39-39" fill="none" stroke="#fff" stroke-width="18.5"/></svg><span class="bt" style="letter-spacing:1.211px;margin-right:-1.211px">-4</span></span></div><div class="td c6"><a style="letter-spacing:0.450px;margin-right:-0.450px">https://www.seobility.net/en/</a><svg class="globe" viewBox="0 0 24 24"><path fill="#6a90b6" d="M12 2C6.480 2 2 6.480 2 12s4.480 10 10 10 10-4.480 10-10S17.520 2 12 2zm-1 17.930c-3.950-.49-7-3.850-7-7.930 0-.62.080-1.210.210-1.790L9 15v1c0 1.100.9 2 2 2v1.930zm6.900-2.540c-.26-.81-1-1.390-1.900-1.390h-1v-3c0-.55-.45-1-1-1H8v-2h2c.55 0 1-.45 1-1V7h2c1.100 0 2-.9 2-2v-.41c2.930 1.190 5 4.060 5 7.410 0 2.080-.8 3.970-2.100 5.390z"/></svg></div><div class="td c7"><span class="bar"><i style="width:0px"></i></span></div></div><div class="tr"><i class="dot"></i><div class="td c1"><a style="letter-spacing:0.311px;margin-right:-0.311px">keywords</a><span class="se"><span class="gc"><svg class="g" viewBox="0 0 48 48"><path fill="#EA4335" d="M24 9.5c3.540 0 6.710 1.220 9.210 3.600l6.850-6.850C35.900 2.380 30.470 0 24 0 14.620 0 6.510 5.380 2.560 13.220l7.980 6.190C12.430 13.720 17.740 9.500 24 9.500z"/><path fill="#4285F4" d="M46.980 24.550c0-1.570-.15-3.090-.38-4.550H24v9.020h12.940c-.58 2.960-2.260 5.480-4.780 7.180l7.730 6c4.510-4.180 7.090-10.360 7.090-17.650z"/><path fill="#FBBC05" d="M10.530 28.590c-.48-1.450-.76-2.990-.76-4.590s.27-3.140.76-4.590l-7.980-6.190C.92 16.460 0 20.120 0 24c0 3.880.92 7.540 2.560 10.780l7.970-6.190z"/><path fill="#34A853" d="M24 48c6.480 0 11.930-2.130 15.890-5.810l-7.730-6c-2.150 1.450-4.920 2.300-8.160 2.300-6.260 0-11.570-4.220-13.470-9.910l-7.980 6.190C6.510 42.620 14.620 48 24 48z"/></svg></span><span class="cc" style="letter-spacing:-0.812px;margin-right:9.312px">DE</span><svg class="mon" viewBox="0 0 16 14.2" fill="none" stroke="#34506b"><rect x="0.600" y="0.600" width="14.800" height="9.800" rx="1.300" stroke-width="1.200"/><path d="M0.600 8.500h14.800" stroke-width="1"/><path d="M8.050 11v2.500" stroke-width="1.900" opacity=".8"/><path d="M4.900 13.550h6.300" stroke-width="1.100" stroke-linecap="round"/></svg></span></div><div class="td c2"><span style="letter-spacing:-0.805px;margin-right:0.805px">10</span></div><div class="td c3"><span class="badge down" style="width:35.57px"><svg class="ar" viewBox="13 49 91 96"><path d="M49.300 49h18.500v82h-18.500z" fill="#fff"/><path d="M19.500 94L58.500 133l39-39" fill="none" stroke="#fff" stroke-width="18.5"/></svg><span class="bt" style="letter-spacing:0.406px;margin-right:-0.406px">2</span></span></div><div class="td c4"><span style="letter-spacing:0.531px;margin-right:-0.531px">56</span></div><div class="td c5"><span class="badge down" style="width:53.88px"><svg class="ar" viewBox="13 49 91 96"><path d="M49.300 49h18.500v82h-18.500z" fill="#fff"/><path d="M19.500 94L58.500 133l39-39" fill="none" stroke="#fff" stroke-width="18.5"/></svg><span class="bt" style="letter-spacing:0.734px;margin-right:-0.734px">-29</span></span></div><div class="td c6"><a style="letter-spacing:0.428px;margin-right:-0.428px">https://www.seobility.net/de/wiki/Keyword</a><svg class="globe" viewBox="0 0 24 24"><path fill="#6a90b6" d="M12 2C6.480 2 2 6.480 2 12s4.480 10 10 10 10-4.480 10-10S17.520 2 12 2zm-1 17.930c-3.950-.49-7-3.850-7-7.930 0-.62.080-1.210.210-1.790L9 15v1c0 1.100.9 2 2 2v1.930zm6.900-2.540c-.26-.81-1-1.390-1.900-1.390h-1v-3c0-.55-.45-1-1-1H8v-2h2c.55 0 1-.45 1-1V7h2c1.100 0 2-.9 2-2v-.41c2.930 1.190 5 4.060 5 7.410 0 2.080-.8 3.970-2.100 5.390z"/></svg></div><div class="td c7"><span class="bar"><i style="width:1.2px"></i></span></div></div><div class="tr"><i class="dot"></i><div class="td c1"><a style="letter-spacing:0.269px;margin-right:-0.269px">pagespeed</a><span class="se"><span class="gc"><svg class="g" viewBox="0 0 48 48"><path fill="#EA4335" d="M24 9.5c3.540 0 6.710 1.220 9.210 3.600l6.850-6.850C35.900 2.380 30.470 0 24 0 14.620 0 6.510 5.380 2.560 13.220l7.980 6.190C12.430 13.720 17.740 9.500 24 9.500z"/><path fill="#4285F4" d="M46.980 24.550c0-1.570-.15-3.090-.38-4.550H24v9.020h12.940c-.58 2.960-2.260 5.480-4.780 7.180l7.730 6c4.510-4.180 7.090-10.360 7.090-17.650z"/><path fill="#FBBC05" d="M10.530 28.590c-.48-1.450-.76-2.990-.76-4.590s.27-3.140.76-4.590l-7.980-6.190C.92 16.460 0 20.120 0 24c0 3.880.92 7.540 2.560 10.780l7.970-6.190z"/><path fill="#34A853" d="M24 48c6.480 0 11.930-2.130 15.890-5.810l-7.730-6c-2.150 1.450-4.920 2.300-8.160 2.300-6.260 0-11.570-4.220-13.470-9.910l-7.980 6.190C6.510 42.620 14.620 48 24 48z"/></svg></span><span class="cc" style="letter-spacing:-0.812px;margin-right:9.312px">DE</span><svg class="mon" viewBox="0 0 16 14.2" fill="none" stroke="#34506b"><rect x="0.600" y="0.600" width="14.800" height="9.800" rx="1.300" stroke-width="1.200"/><path d="M0.600 8.500h14.800" stroke-width="1"/><path d="M8.050 11v2.500" stroke-width="1.900" opacity=".8"/><path d="M4.900 13.550h6.300" stroke-width="1.100" stroke-linecap="round"/></svg></span></div><div class="td c2"><span style="letter-spacing:-0.953px;margin-right:0.953px">21</span></div><div class="td c3"><span class="badge down" style="width:32.98px"><svg class="ar" viewBox="13 49 91 96"><path d="M49.300 49h18.500v82h-18.500z" fill="#fff"/><path d="M19.500 94L58.500 133l39-39" fill="none" stroke="#fff" stroke-width="18.5"/></svg><span class="bt" style="letter-spacing:-2.188px;margin-right:2.188px">1</span></span></div><div class="td c4"><span style="letter-spacing:0.461px;margin-right:-0.461px">25</span></div><div class="td c5"><span class="badge down" style="width:45.44px"><svg class="ar" viewBox="13 49 91 96"><path d="M49.300 49h18.500v82h-18.500z" fill="#fff"/><path d="M19.500 94L58.500 133l39-39" fill="none" stroke="#fff" stroke-width="18.5"/></svg><span class="bt" style="letter-spacing:0.773px;margin-right:-0.773px">-2</span></span></div><div class="td c6"><a style="letter-spacing:0.400px;margin-right:-0.400px">https://www.seobility.net/de/wiki/Pagespeed</a><svg class="globe" viewBox="0 0 24 24"><path fill="#6a90b6" d="M12 2C6.480 2 2 6.480 2 12s4.480 10 10 10 10-4.480 10-10S17.520 2 12 2zm-1 17.930c-3.950-.49-7-3.850-7-7.930 0-.62.080-1.210.210-1.790L9 15v1c0 1.100.9 2 2 2v1.930zm6.900-2.540c-.26-.81-1-1.390-1.900-1.390h-1v-3c0-.55-.45-1-1-1H8v-2h2c.55 0 1-.45 1-1V7h2c1.100 0 2-.9 2-2v-.41c2.930 1.190 5 4.060 5 7.410 0 2.080-.8 3.970-2.100 5.390z"/></svg></div><div class="td c7"><span class="bar"><i style="width:1.2px"></i></span></div></div><div class="tr"><i class="dot"></i><div class="td c1"><a style="letter-spacing:0.240px;margin-right:-0.240px">compare website seo</a><span class="se"><span class="gc"><svg class="g" viewBox="0 0 48 48"><path fill="#EA4335" d="M24 9.5c3.540 0 6.710 1.220 9.210 3.600l6.850-6.850C35.900 2.380 30.470 0 24 0 14.620 0 6.510 5.380 2.560 13.220l7.980 6.190C12.430 13.720 17.740 9.500 24 9.500z"/><path fill="#4285F4" d="M46.980 24.550c0-1.570-.15-3.090-.38-4.550H24v9.020h12.940c-.58 2.960-2.260 5.480-4.780 7.180l7.730 6c4.510-4.180 7.090-10.360 7.090-17.650z"/><path fill="#FBBC05" d="M10.530 28.590c-.48-1.450-.76-2.990-.76-4.590s.27-3.140.76-4.590l-7.980-6.190C.92 16.460 0 20.120 0 24c0 3.880.92 7.540 2.560 10.780l7.970-6.190z"/><path fill="#34A853" d="M24 48c6.480 0 11.930-2.130 15.890-5.810l-7.730-6c-2.150 1.450-4.920 2.300-8.160 2.300-6.260 0-11.570-4.220-13.470-9.910l-7.980 6.190C6.510 42.620 14.620 48 24 48z"/></svg></span><span class="cc" style="letter-spacing:-0.089px;margin-right:8.589px">COM</span><svg class="mon" viewBox="0 0 16 14.2" fill="none" stroke="#34506b"><rect x="0.600" y="0.600" width="14.800" height="9.800" rx="1.300" stroke-width="1.200"/><path d="M0.600 8.500h14.800" stroke-width="1"/><path d="M8.050 11v2.500" stroke-width="1.900" opacity=".8"/><path d="M4.900 13.550h6.300" stroke-width="1.100" stroke-linecap="round"/></svg></span></div><div class="td c2"><span style="letter-spacing:0.469px;margin-right:-0.469px">2</span></div><div class="td c3"><span class="badge down" style="width:32.98px"><svg class="ar" viewBox="13 49 91 96"><path d="M49.300 49h18.500v82h-18.500z" fill="#fff"/><path d="M19.500 94L58.500 133l39-39" fill="none" stroke="#fff" stroke-width="18.5"/></svg><span class="bt" style="letter-spacing:-2.188px;margin-right:2.188px">1</span></span></div><div class="td c4"><span style="letter-spacing:-0.875px;margin-right:0.875px">16</span></div><div class="td c5"><span class="badge down" style="width:51.60px"><svg class="ar" viewBox="13 49 91 96"><path d="M49.300 49h18.500v82h-18.500z" fill="#fff"/><path d="M19.500 94L58.500 133l39-39" fill="none" stroke="#fff" stroke-width="18.5"/></svg><span class="bt" style="letter-spacing:-0.026px;margin-right:0.026px">-18</span></span></div><div class="td c6"><a style="letter-spacing:0.417px;margin-right:-0.417px">https://www.seobility.net/en/seocompare/</a><svg class="globe" viewBox="0 0 24 24"><path fill="#6a90b6" d="M12 2C6.480 2 2 6.480 2 12s4.480 10 10 10 10-4.480 10-10S17.520 2 12 2zm-1 17.930c-3.950-.49-7-3.850-7-7.930 0-.62.080-1.210.210-1.790L9 15v1c0 1.100.9 2 2 2v1.930zm6.900-2.540c-.26-.81-1-1.390-1.900-1.390h-1v-3c0-.55-.45-1-1-1H8v-2h2c.55 0 1-.45 1-1V7h2c1.100 0 2-.9 2-2v-.41c2.930 1.190 5 4.060 5 7.410 0 2.080-.8 3.970-2.100 5.390z"/></svg></div><div class="td c7"><span class="bar"><i style="width:5px"></i></span></div></div><div class="fade"></div></div><div class="foot"><span class="pb"><svg class="chev" viewBox="0 0 7 11" fill="none" stroke="#3a4f66" stroke-width="1.900"><path d="M5.700 0.900L1.400 5.500l4.300 4.600"/></svg></span><span class="pg" style="letter-spacing:-0.628px;margin-right:12.628px">1 of 1</span><span class="pb"><svg class="chev" viewBox="0 0 7 11" fill="none" stroke="#3a4f66" stroke-width="1.900"><path d="M1.300 0.900L5.600 5.500l-4.300 4.600"/></svg></span><span class="sa"><span style="letter-spacing:0.338px;margin-right:-0.338px">Show all keywords</span></span></div></div>
</body></html>
